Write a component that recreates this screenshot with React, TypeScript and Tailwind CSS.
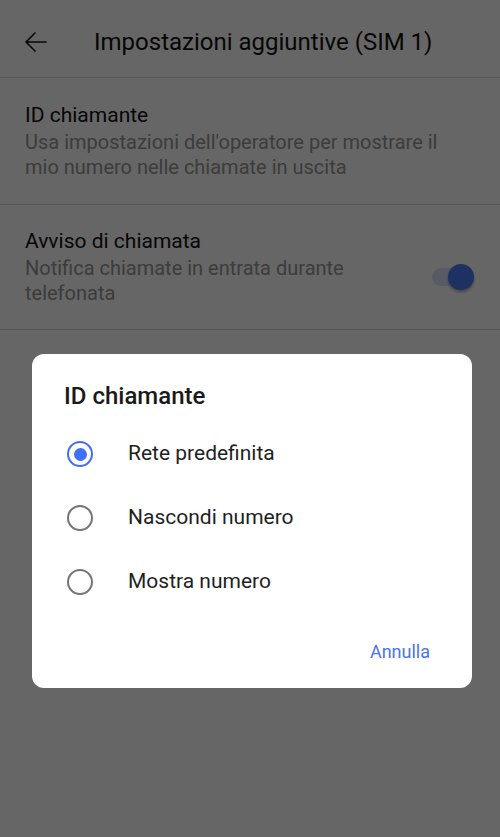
import React from "react";

const font = { fontFamily: "Roboto, 'Noto Sans', sans-serif" };

function BackArrow() {
  return (
    <svg width="24" height="24" viewBox="0 0 24 24" fill="none" stroke="#111" strokeWidth="1.6" strokeLinecap="round" strokeLinejoin="round">
      <path d="M22 12H2M11 3l-9 9 9 9" />
    </svg>
  );
}

function Radio({ checked }: { checked: boolean }) {
  return checked ? (
    <span className="flex h-[26px] w-[26px] items-center justify-center rounded-full border-[2.5px] border-[#3f6ff5]">
      <span className="block h-[13px] w-[13px] rounded-full bg-[#3f6ff5]" />
    </span>
  ) : (
    <span className="block h-[26px] w-[26px] rounded-full border-[2.5px] border-[#757575]" />
  );
}

export default function App() {
  const options = [
    { label: "Rete predefinita", checked: true },
    { label: "Nascondi numero", checked: false },
    { label: "Mostra numero", checked: false },
  ];
  return (
    <div className="relative h-[837px] w-[500px] overflow-hidden bg-white" style={font}>
      {/* settings page */}
      <header className="flex h-[78px] items-center border-b border-[#d8d8d8] pl-[24px] pt-[6px]">
        <BackArrow />
        <h1 className="ml-[46px] text-[24px] text-[#111]">Impostazioni aggiuntive (SIM 1)</h1>
      </header>
      <div className="border-b border-[#d8d8d8] pb-[24px] pl-[25px] pr-[30px] pt-[22px]">
        <div className="text-[21px] leading-[30px] text-[#111]">ID chiamante</div>
        <div className="text-[20px] leading-[25px] text-[#969696]">
          Usa impostazioni dell'operatore per mostrare il mio numero nelle chiamate in uscita
        </div>
      </div>
      <div className="flex items-center border-b border-[#d8d8d8] pb-[23px] pl-[25px] pr-[34px] pt-[21px]">
        <div className="flex-1 pr-[40px]">
          <div className="text-[21px] leading-[30px] text-[#111]">Avviso di chiamata</div>
          <div className="text-[20px] leading-[25px] text-[#969696]">
            Notifica chiamate in entrata durante telefonata
          </div>
        </div>
        <div className="relative mt-[22px] h-[18px] w-[34px] rounded-full bg-[#dde4fb]">
          <span className="absolute -right-[8px] -top-[4px] block h-[26px] w-[26px] rounded-full bg-[#4a7ef8] shadow-[0_2px_3px_rgba(0,0,0,0.35)]" />
        </div>
      </div>

      {/* scrim */}
      <div className="absolute inset-0 bg-black/60" />

      {/* dialog */}
      <div className="absolute left-[32px] top-[354px] w-[440px] rounded-[12px] bg-white pb-[26px] pl-[32px] pr-[42px] pt-[28px]">
        <h2 className="text-[24px] font-medium leading-[28px] text-[#1a1a1a]">ID chiamante</h2>
        <div className="mt-[31px] flex flex-col gap-[38px]">
          {options.map((o) => (
            <div key={o.label} className="flex h-[26px] items-center">
              <span className="ml-[3px] block">
                <Radio checked={o.checked} />
              </span>
              <span className="ml-[35px] text-[21px] text-[#1f1f1f]">{o.label}</span>
            </div>
          ))}
        </div>
        <div className="mt-[46px] flex justify-end">
          <span className="text-[18px] leading-[21px] text-[#4a74f0]">Annulla</span>
        </div>
      </div>
    </div>
  );
}
